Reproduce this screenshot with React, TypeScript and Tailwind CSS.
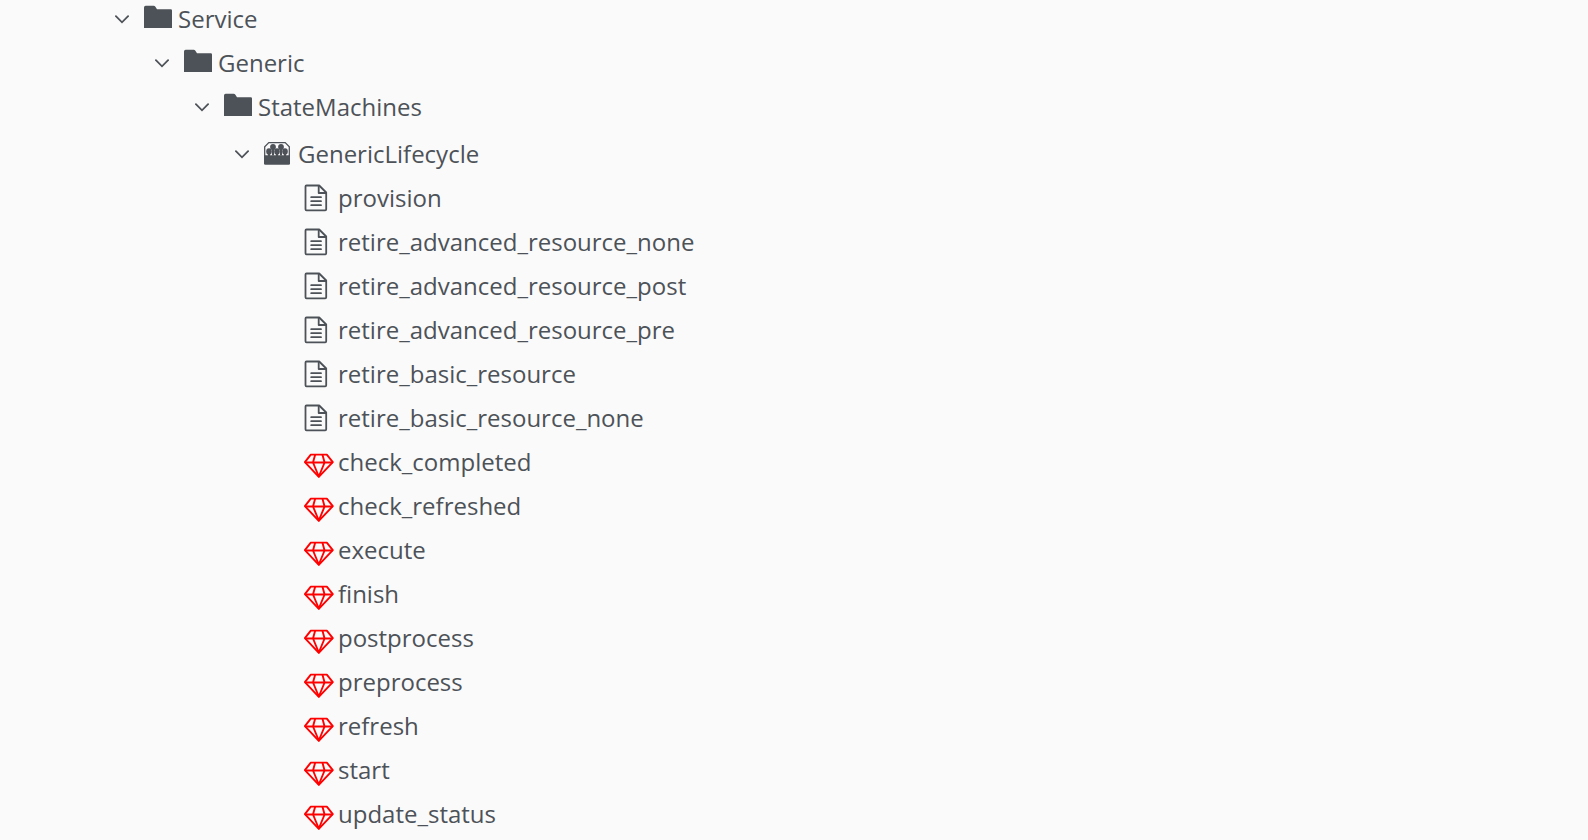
import { useState, type ReactNode } from "react";

type Kind = "folder" | "class" | "instance" | "method";

interface TreeNode {
  name: string;
  kind: Kind;
  children?: TreeNode[];
}

const leaf = (kind: Kind) => (name: string): TreeNode => ({ name, kind });

const tree: TreeNode = {
  name: "Service",
  kind: "folder",
  children: [
    {
      name: "Generic",
      kind: "folder",
      children: [
        {
          name: "StateMachines",
          kind: "folder",
          children: [
            {
              name: "GenericLifecycle",
              kind: "class",
              children: [
                ...[
                  "provision",
                  "retire_advanced_resource_none",
                  "retire_advanced_resource_post",
                  "retire_advanced_resource_pre",
                  "retire_basic_resource",
                  "retire_basic_resource_none",
                ].map(leaf("instance")),
                ...[
                  "check_completed",
                  "check_refreshed",
                  "execute",
                  "finish",
                  "postprocess",
                  "preprocess",
                  "refresh",
                  "start",
                  "update_status",
                ].map(leaf("method")),
              ],
            },
          ],
        },
      ],
    },
  ],
};

const drawings: Record<Kind, ReactNode> = {
  folder: (
    <path
      fill="currentColor"
      d="M0 26V5.4Q0 3.8 1.6 3.8H9.6Q10.8 3.8 11.4 4.7L13 7.2H26.8Q28 7.2 28 8.4V26Z"
    />
  ),
  class: (
    <>
      <path
        fill="none"
        stroke="currentColor"
        strokeWidth="1.3"
        d="M0.7 20V9.7L4.8 5.6H21.2L25.3 9.7V20"
      />
      <g fill="currentColor">
        <ellipse cx="9" cy="10" rx="2.9" ry="3.1" />
        <ellipse cx="17" cy="10" rx="2.9" ry="3.1" />
        <ellipse cx="5" cy="14.6" rx="2.8" ry="3.3" />
        <ellipse cx="13" cy="14.6" rx="2.8" ry="3.3" />
        <ellipse cx="21" cy="14.6" rx="2.8" ry="3.3" />
        <path d="M8 12H10V18.5H8ZM16 12H18V18.5H16ZM4 15H6V19H4ZM12 15H14V19H12ZM20 15H22V19H20Z" />
        <path d="M0 18.2H26V26.5Q26 27.8 24.7 27.8H1.3Q0 27.8 0 26.5Z" />
      </g>
    </>
  ),
  instance: (
    <g fill="none" stroke="currentColor" strokeWidth="1.8">
      <path
        strokeLinejoin="round"
        d="M2.5 4.5H15.2L22.2 11.5V28.3Q22.2 29.3 21.2 29.3H2.5Q1.5 29.3 1.5 28.3V5.5Q1.5 4.5 2.5 4.5Z"
      />
      <path strokeLinejoin="round" d="M14.7 4.7V12H22" />
      <path strokeLinecap="round" d="M7.2 16.2H17M7.2 20.2H17M7.2 24.2H17" />
    </g>
  ),
  method: (
    <g fill="none" stroke="#ff0000" strokeWidth="1.9" strokeLinejoin="round">
      <path d="M6.8 9.6H22.8L28.8 17.2L14.8 31.8L0.9 17.2Z" />
      <path d="M1 17.5H28.7M11.2 9.6L9 17.5L14.8 31.5L20.6 17.5L18.4 9.6" />
    </g>
  ),
};

function Icon({ kind }: { kind: Kind }) {
  return (
    <svg aria-hidden="true" viewBox="0 0 34 34" className="size-[34px] shrink-0">
      {drawings[kind]}
    </svg>
  );
}

function Branch({ node }: { node: TreeNode }) {
  const [open, setOpen] = useState(true);
  const spacing = node.kind === "class" ? "mt-[3px]" : "";

  if (!node.children) {
    return (
      <li>
        <button type="button" className="flex h-11 items-center pl-[29px] whitespace-nowrap">
          <Icon kind={node.kind} />
          {node.name}
        </button>
      </li>
    );
  }

  return (
    <li>
      <button
        type="button"
        aria-expanded={open}
        onClick={() => setOpen(!open)}
        className={`flex h-11 items-center whitespace-nowrap ${spacing}`}
      >
        <svg
          aria-hidden="true"
          viewBox="0 0 14 14"
          className={`mr-[15px] size-3.5 shrink-0 ${open ? "" : "-rotate-90"}`}
        >
          <path
            d="M0.9 4.2L7 10.3L13.1 4.2"
            fill="none"
            stroke="currentColor"
            strokeWidth="1.8"
            strokeLinecap="round"
          />
        </svg>
        <Icon kind={node.kind} />
        {node.name}
      </button>
      {open && (
        <ul className="pl-10">
          {node.children.map((child) => (
            <Branch key={child.name} node={child} />
          ))}
        </ul>
      )}
    </li>
  );
}

export default function App() {
  return (
    <main className="min-h-screen overflow-hidden bg-[#fafafa] pl-[115px] font-['Open_Sans',sans-serif] text-2xl text-[#4d5258]">
      <ul className="-mt-[3px]">
        <Branch node={tree} />
      </ul>
    </main>
  );
}
